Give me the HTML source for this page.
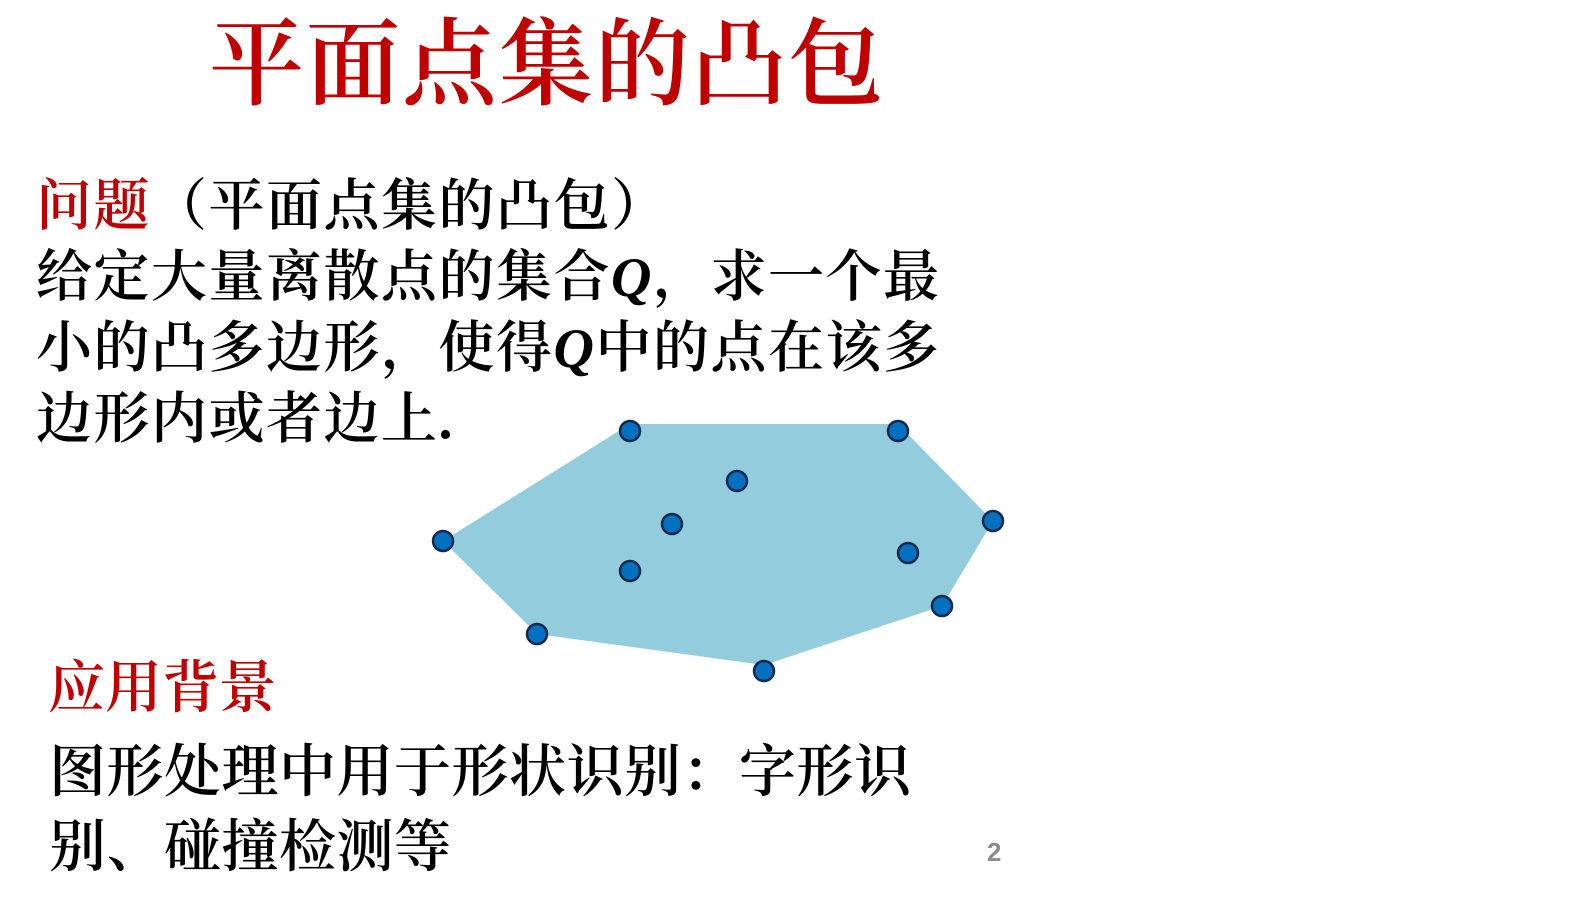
<!DOCTYPE html>
<html><head><meta charset="utf-8"><style>
body{margin:0;width:1576px;height:908px;background:#fff;position:relative;overflow:hidden;font-family:"Liberation Serif","Noto Serif CJK SC",serif;font-weight:600}
.t{position:absolute;white-space:nowrap;line-height:1}
.r{color:#c00000}
</style></head><body>
<div class="t r" style="left:209px;top:18px;font-size:95px;letter-spacing:1.5px;font-weight:600">平面点集的凸包</div>
<div class="t" style="left:36px;top:172px;font-size:56px;line-height:71px;letter-spacing:1.5px"><span class="r">问题</span>（平面点集的凸包）<br>给定大量离散点的集合<i>Q</i>，求一个最<br>小的凸多边形，使得<i>Q</i>中的点在该多<br>边形内或者边上.</div>
<svg style="position:absolute;left:0;top:0" width="1576" height="908">
<polygon points="630,424 898,424 993,521 942,606 764,665 537,634 443,541" fill="#93cddd"/>
<g fill="#0070c0" stroke="#17284d" stroke-width="2.5">
<circle cx="630" cy="431" r="10"/><circle cx="898" cy="431" r="10"/><circle cx="993" cy="521" r="10"/><circle cx="942" cy="606" r="10"/><circle cx="764" cy="671" r="10"/><circle cx="537" cy="634" r="10"/><circle cx="443" cy="541" r="10"/><circle cx="737" cy="481" r="10"/><circle cx="672" cy="524" r="10"/><circle cx="630" cy="571" r="10"/><circle cx="908" cy="553" r="10"/>
</g></svg>
<div class="t r" style="left:48px;top:660px;font-size:57px">应用背景</div>
<div class="t" style="left:49px;top:735px;font-size:57px;line-height:75px;letter-spacing:0.5px">图形处理中用于形状识别：字形识<br>别、碰撞检测等</div>
<div class="t" style="left:987px;top:839px;font-size:26px;color:#8c8c8c;font-family:'Liberation Sans',sans-serif;font-weight:bold">2</div>
</body></html>
